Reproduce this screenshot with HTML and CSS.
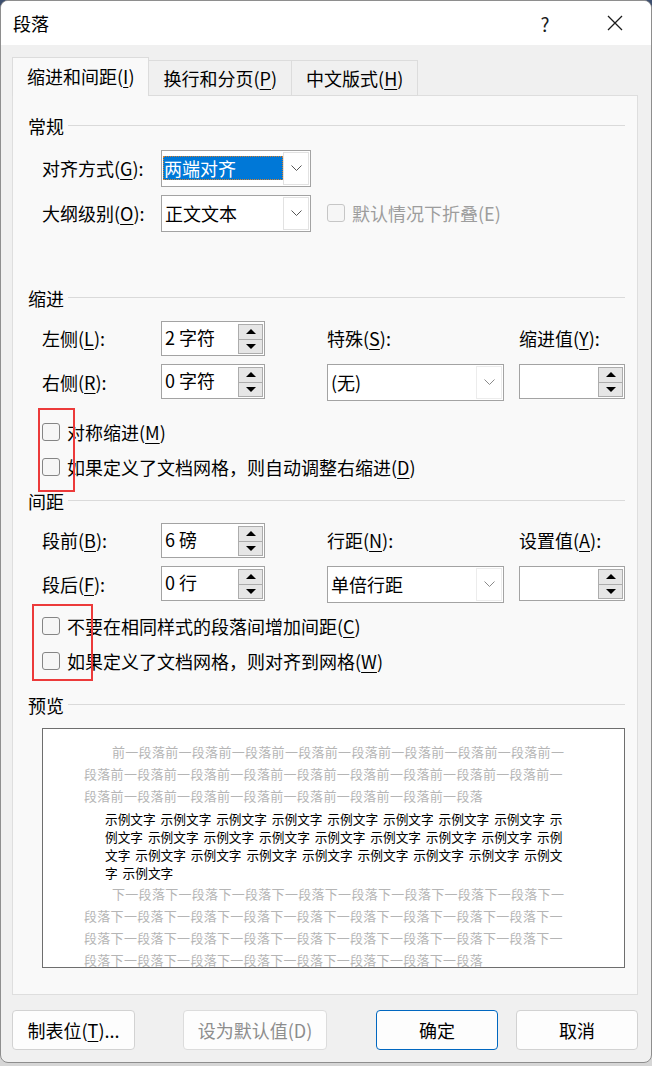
FILE: index.html
```html
<!DOCTYPE html>
<html lang="zh-CN">
<head>
    <meta charset="UTF-8">
    <meta name="viewport" content="width=device-width, initial-scale=1.0">
    <title>段落</title>
    <link rel="stylesheet" href="styles.css">
</head>
<body>
    <div class="dialog">
        <!-- Title bar -->
        <div class="titlebar">
            <div class="title">段落</div>
            <div class="title-actions">
                <span class="tb-btn help">?</span>
                <span class="tb-btn">
                    <svg width="16" height="16" viewBox="0 0 16 16"><path d="M1 1L15 15M15 1L1 15" stroke="#1b1b1b" stroke-width="1.3" fill="none"/></svg>
                </span>
            </div>
        </div>

        <!-- Tabs -->
        <div class="tabs">
            <div class="tab active">缩进和间距(<u>I</u>)</div>
            <div class="tab">换行和分页(<u>P</u>)</div>
            <div class="tab">中文版式(<u>H</u>)</div>
        </div>

        <div class="panel">
            <!-- General -->
            <div class="section-title"><span>常规</span><i></i></div>
            <div class="general">
                <div class="form-row">
                    <div class="label">对齐方式(<u>G</u>):</div>
                    <div class="select">
                        <span class="select-value focused">两端对齐</span>
                        <span class="select-drop"><svg width="11" height="7" viewBox="0 0 11 7"><path d="M0.5 0.5L5.5 5.5L10.5 0.5" stroke="#555" fill="none"/></svg></span>
                    </div>
                </div>
                <div class="form-row second">
                    <div class="label">大纲级别(<u>O</u>):</div>
                    <div class="select">
                        <span class="select-value">正文文本</span>
                        <span class="select-drop"><svg width="11" height="7" viewBox="0 0 11 7"><path d="M0.5 0.5L5.5 5.5L10.5 0.5" stroke="#555" fill="none"/></svg></span>
                    </div>
                    <div class="check disabled inline">
                        <span class="box"></span>默认情况下折叠(E)
                    </div>
                </div>
            </div>

            <!-- Indent -->
            <div class="section-title indent-title"><span>缩进</span><i></i></div>
            <div class="field-grid">
                <div class="label">左侧(<u>L</u>):</div>
                <div class="spin">
                    <span class="spin-value">2 字符</span>
                    <span class="spin-buttons"><span class="spin-btn"><i class="arrow-up"></i></span><span class="spin-btn"><i class="arrow-down"></i></span></span>
                </div>
                <div class="label col-3">特殊(<u>S</u>):</div>
                <div class="label col-5">缩进值(<u>Y</u>):</div>

                <div class="label">右侧(<u>R</u>):</div>
                <div class="spin">
                    <span class="spin-value">0 字符</span>
                    <span class="spin-buttons"><span class="spin-btn"><i class="arrow-up"></i></span><span class="spin-btn"><i class="arrow-down"></i></span></span>
                </div>
                <div class="select wide col-3">
                    <span class="select-value">(无)</span>
                    <span class="select-drop light"><svg width="11" height="7" viewBox="0 0 11 7"><path d="M0.5 0.5L5.5 5.5L10.5 0.5" stroke="#8a8a8a" fill="none"/></svg></span>
                </div>
                <div class="spin narrow col-5">
                    <span class="spin-value"></span>
                    <span class="spin-buttons"><span class="spin-btn"><i class="arrow-up"></i></span><span class="spin-btn"><i class="arrow-down"></i></span></span>
                </div>
            </div>
            <div class="checklist first-list">
                <div class="check"><span class="box"></span>对称缩进(<u>M</u>)</div>
                <div class="check"><span class="box"></span>如果定义了文档网格，则自动调整右缩进(<u>D</u>)</div>
                <div class="mark mark-1"></div>
            </div>

            <!-- Spacing -->
            <div class="section-title spacing-title"><span>间距</span><i></i></div>
            <div class="field-grid spacing-grid">
                <div class="label">段前(<u>B</u>):</div>
                <div class="spin">
                    <span class="spin-value">6 磅</span>
                    <span class="spin-buttons"><span class="spin-btn"><i class="arrow-up"></i></span><span class="spin-btn"><i class="arrow-down"></i></span></span>
                </div>
                <div class="label col-3">行距(<u>N</u>):</div>
                <div class="label col-5">设置值(<u>A</u>):</div>

                <div class="label">段后(<u>F</u>):</div>
                <div class="spin">
                    <span class="spin-value">0 行</span>
                    <span class="spin-buttons"><span class="spin-btn"><i class="arrow-up"></i></span><span class="spin-btn"><i class="arrow-down"></i></span></span>
                </div>
                <div class="select wide col-3">
                    <span class="select-value">单倍行距</span>
                    <span class="select-drop light"><svg width="11" height="7" viewBox="0 0 11 7"><path d="M0.5 0.5L5.5 5.5L10.5 0.5" stroke="#8a8a8a" fill="none"/></svg></span>
                </div>
                <div class="spin narrow col-5">
                    <span class="spin-value"></span>
                    <span class="spin-buttons"><span class="spin-btn"><i class="arrow-up"></i></span><span class="spin-btn"><i class="arrow-down"></i></span></span>
                </div>
            </div>
            <div class="checklist second-list">
                <div class="check"><span class="box"></span>不要在相同样式的段落间增加间距(<u>C</u>)</div>
                <div class="check"><span class="box"></span>如果定义了文档网格，则对齐到网格(<u>W</u>)</div>
                <div class="mark mark-2"></div>
            </div>

            <!-- Preview -->
            <div class="section-title preview-title"><span>预览</span><i></i></div>
            <div class="preview">
                <div class="pv-grey">
                    <p class="first">前一段落前一段落前一段落前一段落前一段落前一段落前一段落前一段落前一</p>
                    <p>段落前一段落前一段落前一段落前一段落前一段落前一段落前一段落前一段落前一</p>
                    <p>段落前一段落前一段落前一段落前一段落前一段落前一段落前一段落</p>
                </div>
                <div class="pv-sample">
                    <p>示例文字 示例文字 示例文字 示例文字 示例文字 示例文字 示例文字 示例文字 示</p>
                    <p>例文字 示例文字 示例文字 示例文字 示例文字 示例文字 示例文字 示例文字 示例</p>
                    <p>文字 示例文字 示例文字 示例文字 示例文字 示例文字 示例文字 示例文字 示例文</p>
                    <p>字 示例文字</p>
                </div>
                <div class="pv-grey after">
                    <p class="first">下一段落下一段落下一段落下一段落下一段落下一段落下一段落下一段落下一</p>
                    <p>段落下一段落下一段落下一段落下一段落下一段落下一段落下一段落下一段落下一</p>
                    <p>段落下一段落下一段落下一段落下一段落下一段落下一段落下一段落下一段落下一</p>
                    <p>段落下一段落下一段落下一段落下一段落下一段落下一段落下一段落</p>
                </div>
            </div>
        </div>

        <!-- Buttons -->
        <div class="buttons">
            <button class="btn tabs-btn">制表位(<u>T</u>)...</button>
            <button class="btn default-btn" disabled>设为默认值(D)</button>
            <button class="btn ok-btn">确定</button>
            <button class="btn">取消</button>
        </div>
    </div>
</body>
</html>
```

FILE: styles.css
```css
/* General Styles */
* {
    margin: 0;
    padding: 0;
    box-sizing: border-box;
}

body {
    width: 652px;
    height: 1066px;
    overflow: hidden;
    background: linear-gradient(#3d4f6f 0, #3d4f6f 60px, #d6d6d6 60px);
    font-family: "Noto Sans CJK SC", "Microsoft YaHei", sans-serif;
    font-size: 18px;
    color: #000;
}

u {
    text-decoration: underline;
    text-underline-offset: 3px;
    text-decoration-thickness: 1px;
}

.dialog {
    width: 652px;
    height: 1063px;
    background-color: #f0f0f0;
    border: 1px solid #8e8e8e;
    border-radius: 8px;
    overflow: hidden;
}

/* Title bar */
.titlebar {
    display: flex;
    align-items: center;
    height: 44px;
    background-color: #fff;
    padding-left: 12px;
}

.title {
    font-size: 18px;
    line-height: 24px;
}

.title-actions {
    display: flex;
    margin-left: auto;
    gap: 24px;
    padding-right: 13px;
}

.tb-btn {
    display: flex;
    align-items: center;
    justify-content: center;
    width: 46px;
    height: 44px;
    font-size: 19px;
    color: #1b1b1b;
}

/* Tabs */
.tabs {
    display: flex;
    align-items: flex-end;
    height: 39px;
    margin-top: 12px;
    margin-bottom: -1px;
    padding-left: 11px;
    position: relative;
    z-index: 1;
}

.tab {
    display: flex;
    align-items: center;
    height: 36px;
    padding: 0 14px 0 14px;
    background-color: #f0f0f0;
    border: 1px solid #dcdcdc;
    border-left: none;
    line-height: 24px;
}

.tab.active {
    height: 39px;
    padding: 0 14px 2px 14px;
    background-color: #f9f9f9;
    border-left: 1px solid #dcdcdc;
    border-bottom: none;
}

/* Panel */
.panel {
    width: 626px;
    height: 900px;
    margin-left: 11px;
    background-color: #f9f9f9;
    border: 1px solid #dedede;
    padding: 18px 12px 0 15px;
}

.section-title {
    display: flex;
    align-items: center;
    height: 24px;
    line-height: 24px;
}

.section-title i {
    flex: 1;
    height: 1px;
    margin: -2px 0 0 4px;
    background-color: #dadada;
}

.indent-title {
    margin-top: 54px;
}

.spacing-title {
    margin-top: 4px;
}

.preview-title {
    margin-top: 14px;
}

/* Form controls */
.general {
    margin-top: 12px;
    padding-left: 14px;
}

.form-row {
    display: flex;
    align-items: center;
    height: 37px;
}

.form-row.second {
    margin-top: 8px;
}

.label {
    display: flex;
    align-items: center;
    width: 119px;
    padding-bottom: 1px;
    line-height: 24px;
    white-space: nowrap;
}

.select {
    display: flex;
    width: 150px;
    height: 37px;
    padding: 1px;
    background-color: #fff;
    border: 1px solid #a3a3a3;
}

.select.wide {
    width: 177px;
}

.select-value {
    flex: 1;
    display: flex;
    align-items: center;
    padding: 0 0 1px 2px;
    line-height: 24px;
}

.select-value.focused {
    margin: 4px 0 5px 0;
    padding-left: 1px;
    background-color: #0078d7;
    color: #fff;
    outline: 1px dotted #d9822b;
    outline-offset: -1px;
}

.select-drop {
    display: flex;
    align-items: center;
    justify-content: center;
    width: 26px;
    border: 1px solid #e2e2e2;
}

.select-drop.light {
    border-color: #ececec;
}

.field-grid {
    display: grid;
    grid-template-columns: 119px 104px 62px 177px 15px 106px;
    grid-template-rows: 35px 37px;
    row-gap: 8px;
    align-items: start;
    margin-top: 11px;
    padding-left: 14px;
}

.field-grid .label {
    align-self: stretch;
}

.field-grid .col-3 {
    grid-column: 4;
}

.field-grid .col-5 {
    grid-column: 6;
    width: auto;
}

.spacing-grid {
    margin-top: 10px;
}

.spin {
    display: flex;
    width: 104px;
    height: 35px;
    padding: 2px 1px 1px 2px;
    background-color: #fff;
    border: 1px solid #a3a3a3;
}

.spin.narrow {
    width: 106px;
}

.spin-value {
    flex: 1;
    padding-left: 1px;
    line-height: 26px;
}

.spin-buttons {
    display: flex;
    flex-direction: column;
    width: 25px;
    border: 1px solid #acacac;
}

.spin-btn {
    flex: 1;
    display: flex;
    align-items: center;
    justify-content: center;
    background-color: #e6e6e6;
}

.spin-btn + .spin-btn {
    border-top: 1px solid #acacac;
}

.arrow-up {
    border-left: 5px solid transparent;
    border-right: 5px solid transparent;
    border-bottom: 5px solid #000;
}

.arrow-down {
    border-left: 5px solid transparent;
    border-right: 5px solid transparent;
    border-top: 5px solid #000;
}

/* Checkboxes */
.checklist {
    position: relative;
    padding-left: 14px;
}

.first-list {
    margin-top: 14px;
}

.second-list {
    margin-top: 6px;
}

.check {
    display: flex;
    align-items: center;
    height: 35px;
    padding-bottom: 1px;
    line-height: 24px;
    white-space: nowrap;
}

.check .box {
    width: 18px;
    height: 18px;
    margin-right: 7px;
    background-color: #f6f6f6;
    border: 1px solid #858585;
    border-radius: 3px;
}

.check.inline {
    margin-left: 16px;
    height: 37px;
}

.check.disabled {
    color: #9d9d9d;
}

.check.disabled .box {
    border-color: #c6c6c6;
}

/* red marks over the checkboxes */
.mark {
    position: absolute;
    border: 2px solid #ec3a3a;
}

.mark-1 {
    left: 10px;
    top: -7px;
    width: 37px;
    height: 84px;
}

.mark-2 {
    left: 4px;
    top: -5px;
    width: 61px;
    height: 77px;
}

/* Preview */
.preview {
    width: 583px;
    height: 240px;
    margin: 11px 0 0 14px;
    padding-top: 12px;
    background-color: #fff;
    border: 1px solid #6e6e6e;
    white-space: nowrap;
    overflow: hidden;
}

.pv-grey {
    padding-left: 41px;
    font-size: 13px;
    letter-spacing: 0.3px;
    line-height: 22px;
    color: #b5b5b5;
}

.pv-grey .first {
    padding-left: 28px;
}

.pv-grey.after {
    margin-top: 1px;
}

.pv-sample {
    margin-top: 3px;
    padding-left: 62px;
    font-size: 12.7px;
    word-spacing: 2px;
    line-height: 18px;
    color: #000;
}

/* Buttons */
.buttons {
    display: flex;
    margin-top: 15px;
    padding-left: 11px;
}

.btn {
    height: 40px;
    width: 123px;
    font-family: inherit;
    font-size: 18px;
    color: #000;
    background-color: #fdfdfd;
    border: 1px solid #d2d2d2;
    border-radius: 4px;
}

.default-btn {
    width: 144px;
    margin-left: 48px;
    color: #8d8d8d;
    border-color: #dcdcdc;
}

.ok-btn {
    width: 122px;
    margin-left: 49px;
    margin-right: 18px;
    border-color: #0067c0;
}

.buttons .btn:last-child {
    width: 122px;
}
```
